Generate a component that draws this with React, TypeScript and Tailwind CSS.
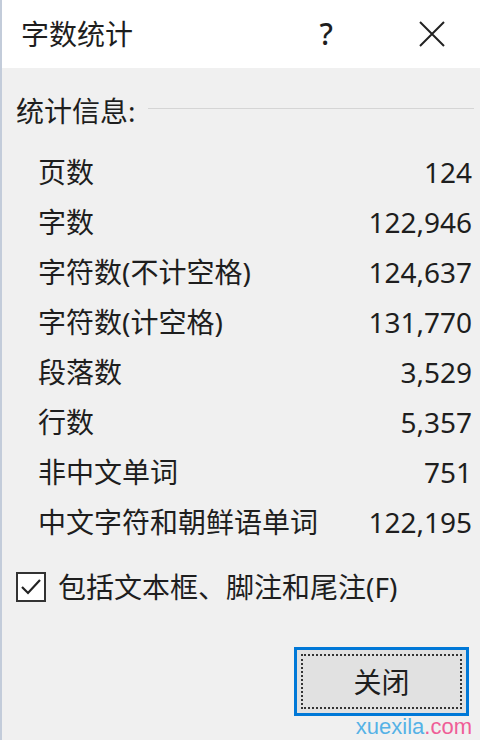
import React from 'react';

const rows: [string, string][] = [
  ['页数', '124'],
  ['字数', '122,946'],
  ['字符数(不计空格)', '124,637'],
  ['字符数(计空格)', '131,770'],
  ['段落数', '3,529'],
  ['行数', '5,357'],
  ['非中文单词', '751'],
  ['中文字符和朝鲜语单词', '122,195'],
];

export default function App() {
  return (
    <div className="w-[480px] h-[740px] overflow-hidden flex flex-col border-l-2 border-[#c3ccda] bg-[#f0f0f0] text-[#1e1e1e] text-[28px] leading-none font-['Noto_Sans','Noto_Sans_CJK_SC',sans-serif]">
      {/* title bar */}
      <div className="h-[68px] shrink-0 bg-white flex items-center">
        <span className="pl-[19px]">字数统计</span>
        <span className="ml-auto text-[30px] font-medium">?</span>
        <svg className="ml-[86px] mr-[35px]" width="26" height="26" viewBox="0 0 26 26">
          <path d="M1 1 L25 25 M25 1 L1 25" stroke="#222" strokeWidth="2" fill="none" />
        </svg>
      </div>

      <div className="flex flex-col">
        {/* group header */}
        <div className="mt-[28px] h-[30px] flex items-center pl-[14px] pr-[6px]">
          <span>统计信息:</span>
          <div className="flex-1 ml-[12px] -mt-[6px] h-px bg-[#d5d5d5]" />
        </div>

        <div className="mt-[21px] flex flex-col pl-[36px] pr-[8px]">
          {rows.map(([label, value]) => (
            <div key={label} className="h-[50px] flex items-center justify-between">
              <span>{label}</span>
              <span>{value}</span>
            </div>
          ))}
        </div>

        {/* checkbox */}
        <div className="mt-[25px] h-[30px] flex items-center pl-[14px]">
          <div className="w-[30px] h-[30px] border-2 border-[#333] bg-white flex items-center justify-center">
            <svg width="22" height="22" viewBox="0 0 22 22">
              <path d="M2 11 L8 17 L20 4" stroke="#222" strokeWidth="2.2" fill="none" />
            </svg>
          </div>
          <span className="ml-[12px]">包括文本框、脚注和尾注(F)</span>
        </div>

        {/* button */}
        <div className="mt-[45px] flex justify-end pr-[11px]">
          <button className="w-[175px] h-[69px] border-[3px] border-[#0078d7] bg-[#e1e1e1] p-[4px]">
            <div className="w-full h-full border-2 border-dotted border-[#333] flex items-center justify-center">
              关闭
            </div>
          </button>
        </div>

        {/* watermark */}
        <div className="h-[22px] flex items-center justify-end pr-[8px] text-[22px] font-['Liberation_Sans',sans-serif] leading-none">
          <span className="text-[#55b2e6]">xuexila</span>
          <span className="text-[#ef5e97]">.com</span>
        </div>
      </div>
    </div>
  );
}
